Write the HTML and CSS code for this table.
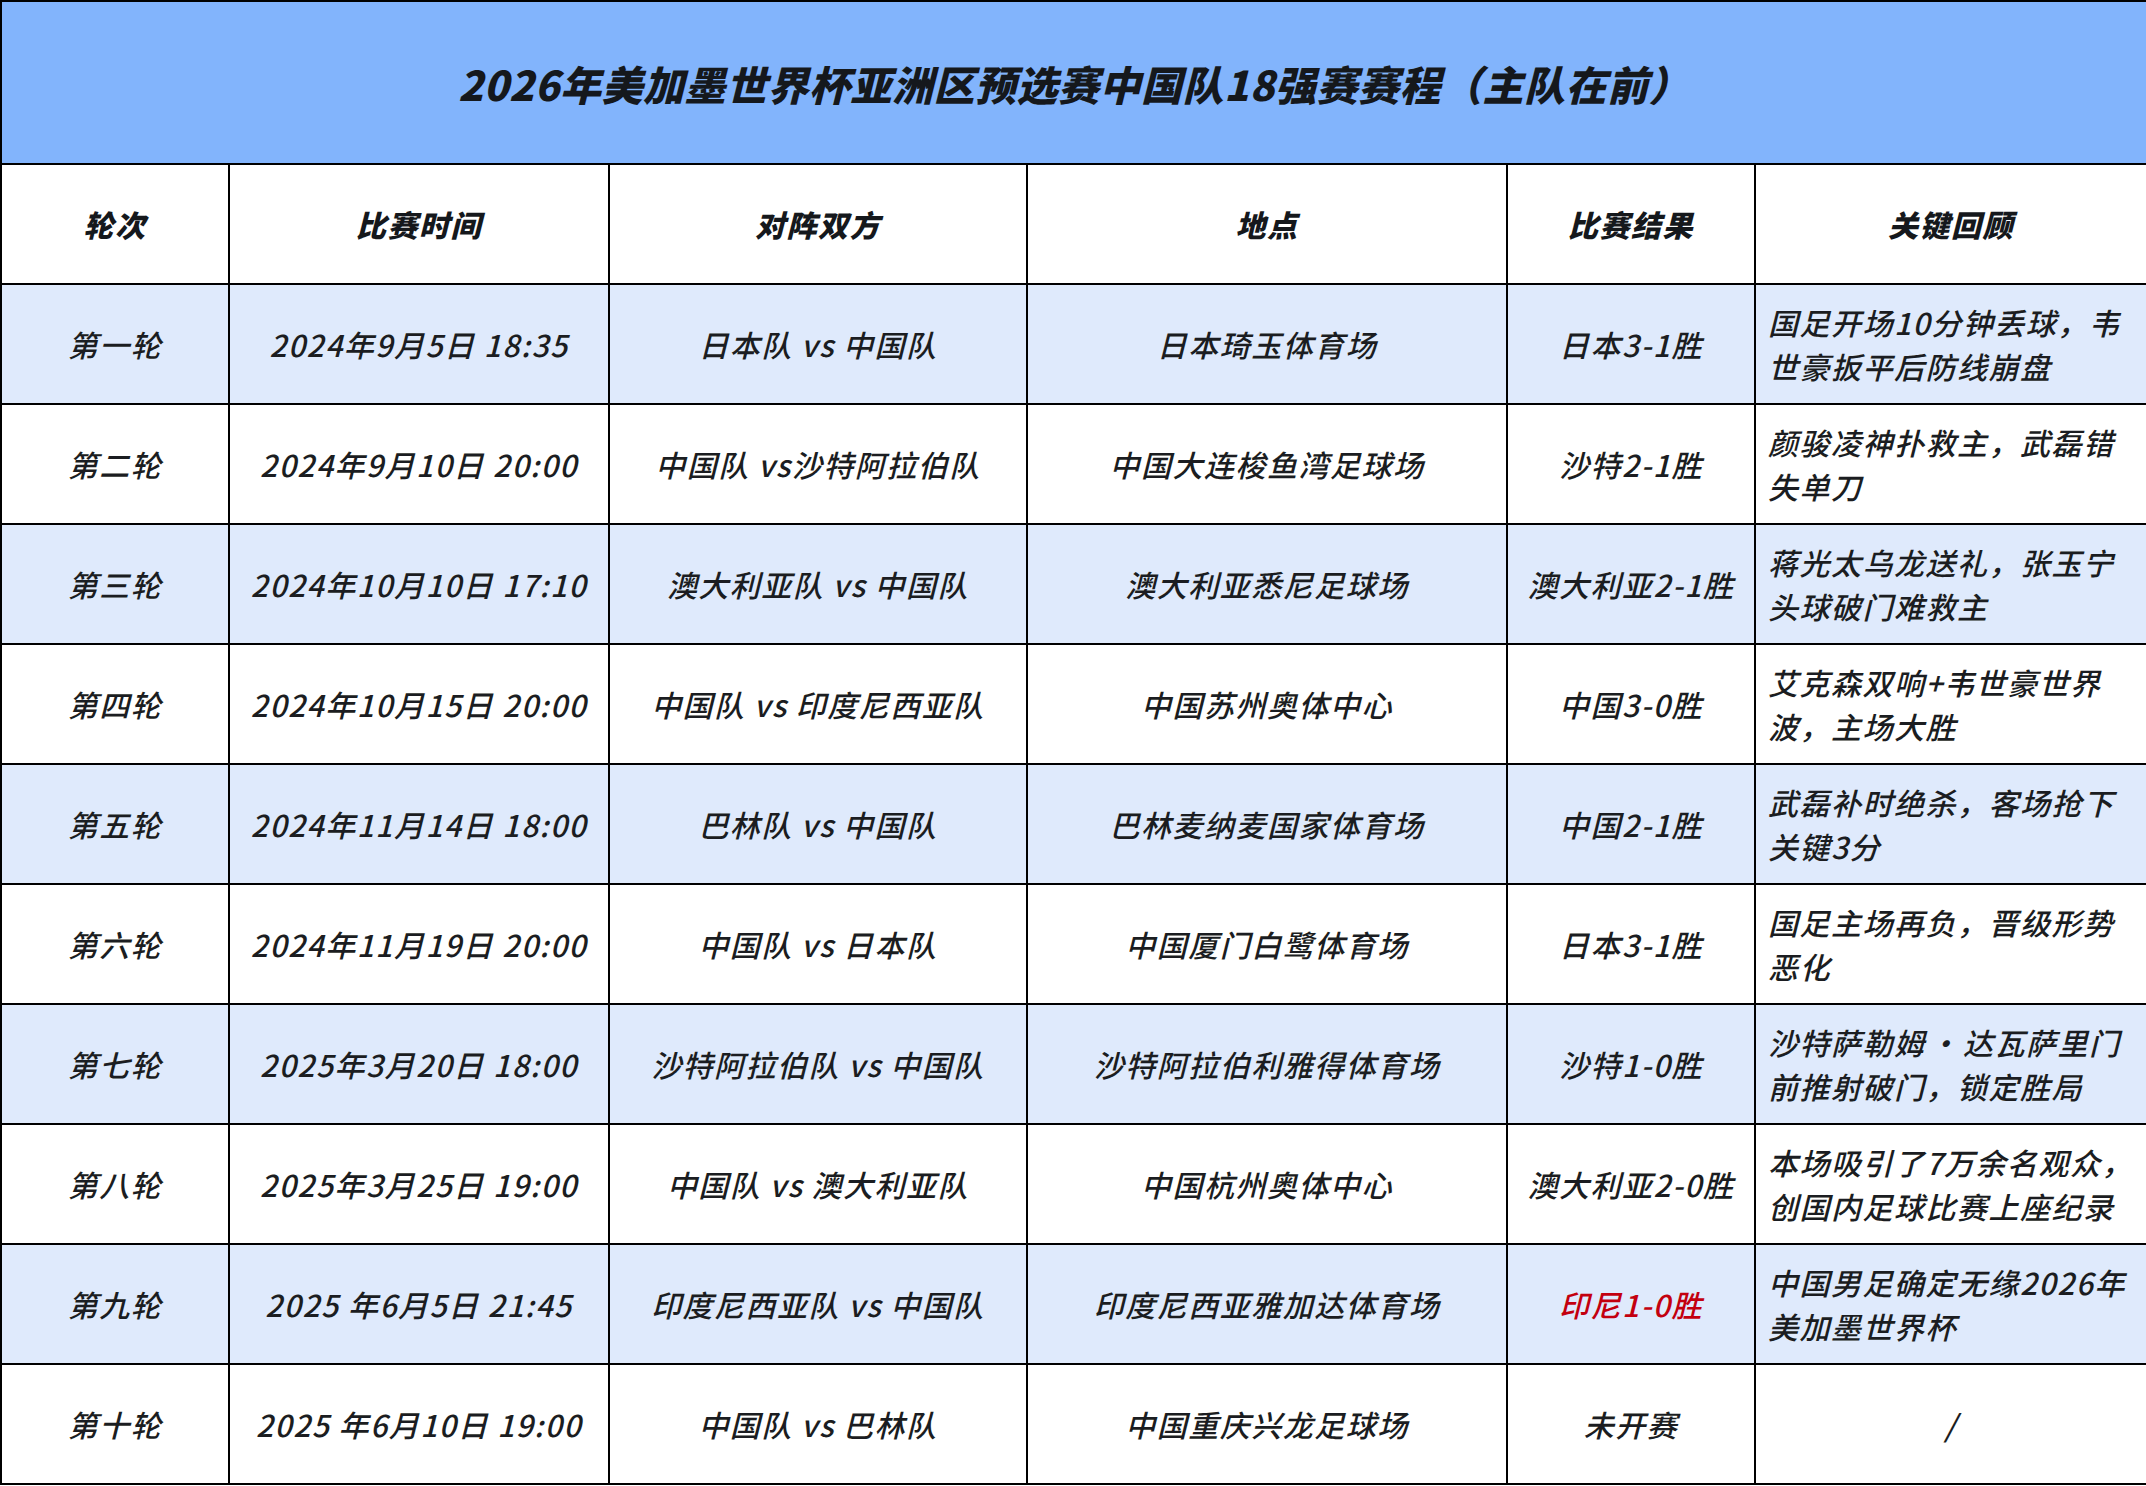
FILE: index.html
```html
<!DOCTYPE html>
<html lang="zh-CN">
<head>
<meta charset="utf-8">
<title>2026年美加墨世界杯亚洲区预选赛中国队18强赛赛程</title>
<link rel="stylesheet" href="styles.css">
</head>
<body>
<table class="schedule">
  <colgroup>
    <col class="c-round">
    <col class="c-time">
    <col class="c-teams">
    <col class="c-venue">
    <col class="c-result">
    <col class="c-note">
  </colgroup>
  <thead>
    <tr class="title-row">
      <th colspan="6" class="title">2026年美加墨世界杯亚洲区预选赛中国队18强赛赛程（主队在前）</th>
    </tr>
    <tr class="head-row">
      <th>轮次</th>
      <th>比赛时间</th>
      <th>对阵双方</th>
      <th>地点</th>
      <th>比赛结果</th>
      <th>关键回顾</th>
    </tr>
  </thead>
  <tbody>
    <tr class="alt">
      <td>第一轮</td>
      <td>2024年9月5日 18:35</td>
      <td>日本队 vs 中国队</td>
      <td>日本琦玉体育场</td>
      <td>日本3-1胜</td>
      <td class="note">国足开场10分钟丢球，韦<br>世豪扳平后防线崩盘</td>
    </tr>
    <tr>
      <td>第二轮</td>
      <td>2024年9月10日 20:00</td>
      <td>中国队 vs沙特阿拉伯队</td>
      <td>中国大连梭鱼湾足球场</td>
      <td>沙特2-1胜</td>
      <td class="note">颜骏凌神扑救主，武磊错<br>失单刀</td>
    </tr>
    <tr class="alt">
      <td>第三轮</td>
      <td>2024年10月10日 17:10</td>
      <td>澳大利亚队 vs 中国队</td>
      <td>澳大利亚悉尼足球场</td>
      <td>澳大利亚2-1胜</td>
      <td class="note">蒋光太乌龙送礼，张玉宁<br>头球破门难救主</td>
    </tr>
    <tr>
      <td>第四轮</td>
      <td>2024年10月15日 20:00</td>
      <td>中国队 vs 印度尼西亚队</td>
      <td>中国苏州奥体中心</td>
      <td>中国3-0胜</td>
      <td class="note">艾克森双响+韦世豪世界<br>波，主场大胜</td>
    </tr>
    <tr class="alt">
      <td>第五轮</td>
      <td>2024年11月14日 18:00</td>
      <td>巴林队 vs 中国队</td>
      <td>巴林麦纳麦国家体育场</td>
      <td>中国2-1胜</td>
      <td class="note">武磊补时绝杀，客场抢下<br>关键3分</td>
    </tr>
    <tr>
      <td>第六轮</td>
      <td>2024年11月19日 20:00</td>
      <td>中国队 vs 日本队</td>
      <td>中国厦门白鹭体育场</td>
      <td>日本3-1胜</td>
      <td class="note">国足主场再负，晋级形势<br>恶化</td>
    </tr>
    <tr class="alt">
      <td>第七轮</td>
      <td>2025年3月20日 18:00</td>
      <td>沙特阿拉伯队 vs 中国队</td>
      <td>沙特阿拉伯利雅得体育场</td>
      <td>沙特1-0胜</td>
      <td class="note">沙特萨勒姆<span class="dot">·</span>达瓦萨里门<br>前推射破门，锁定胜局</td>
    </tr>
    <tr>
      <td>第八轮</td>
      <td>2025年3月25日 19:00</td>
      <td>中国队 vs 澳大利亚队</td>
      <td>中国杭州奥体中心</td>
      <td>澳大利亚2-0胜</td>
      <td class="note">本场吸引了7万余名观众，<br>创国内足球比赛上座纪录</td>
    </tr>
    <tr class="alt">
      <td>第九轮</td>
      <td>2025 年6月5日 21:45</td>
      <td>印度尼西亚队 vs 中国队</td>
      <td>印度尼西亚雅加达体育场</td>
      <td class="red">印尼1-0胜</td>
      <td class="note">中国男足确定无缘2026年<br>美加墨世界杯</td>
    </tr>
    <tr>
      <td>第十轮</td>
      <td>2025 年6月10日 19:00</td>
      <td>中国队 vs 巴林队</td>
      <td>中国重庆兴龙足球场</td>
      <td>未开赛</td>
      <td>/</td>
    </tr>
  </tbody>
</table>
</body>
</html>
```

FILE: styles.css
```css
html, body {
  margin: 0;
  padding: 0;
  background: #ffffff;
}

body {
  font-family: "Noto Sans CJK SC", "Noto Sans", sans-serif;
  color: #1b1d21;
}

.schedule {
  width: 2146px;
  border-collapse: collapse;
  table-layout: fixed;
}

.c-round { width: 228px; }
.c-time { width: 380px; }
.c-teams { width: 418px; }
.c-venue { width: 480px; }
.c-result { width: 248px; }
.c-note { width: 392px; }

.schedule th,
.schedule td {
  border: 2px solid #000000;
  padding: 0;
  text-align: center;
  vertical-align: middle;
  font-size: 30px;
  font-style: italic;
  letter-spacing: 1.5px;
  line-height: 44px;
}

.title-row {
  height: 163px;
  background: #82b4fc;
}

.schedule th.title {
  font-size: 41px;
  font-weight: 900;
  letter-spacing: 0.5px;
  color: #15181c;
}

.head-row {
  height: 120px;
  background: #ffffff;
}

.schedule .head-row th {
  font-weight: 900;
  color: #15181c;
}

.schedule tbody tr {
  height: 120px;
  background: #ffffff;
}

.schedule tbody tr.alt {
  background: #dfeafc;
}

.schedule td {
  font-weight: 500;
}

.schedule td.note {
  text-align: left;
  padding-left: 12px;
}

.dot {
  margin: 0 3px;
}

.schedule td.red {
  color: #c3000f;
}
```
